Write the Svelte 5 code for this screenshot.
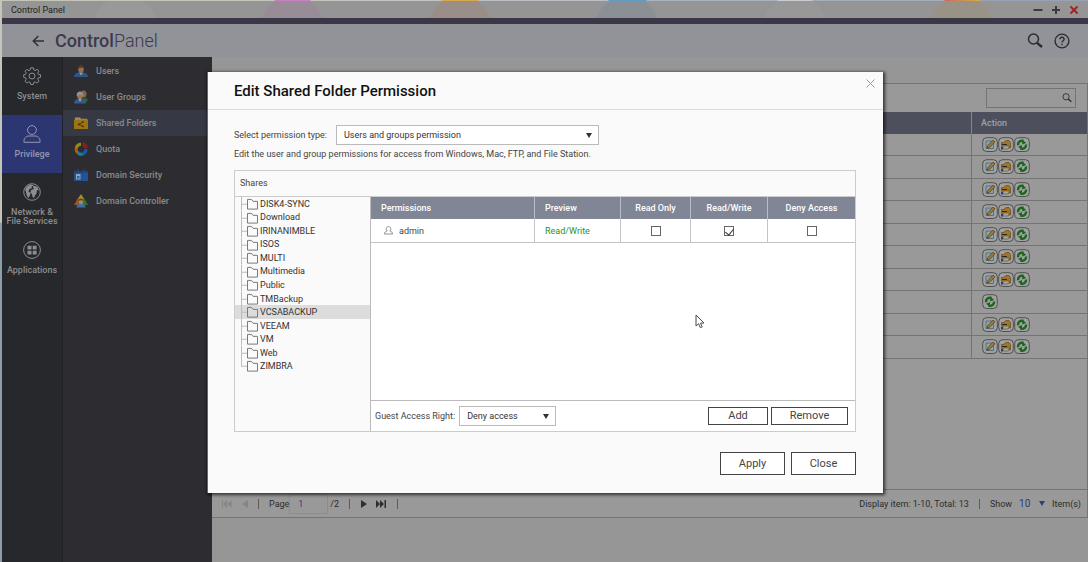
<script>
  const sections = [
    { id: 'system', lines: ['System'] },
    { id: 'privilege', lines: ['Privilege'] },
    { id: 'network', lines: ['Network &', 'File Services'] },
    { id: 'apps', lines: ['Applications'] },
  ];

  const pages = [
    { id: 'users', label: 'Users' },
    { id: 'groups', label: 'User Groups' },
    { id: 'folders', label: 'Shared Folders' },
    { id: 'quota', label: 'Quota' },
    { id: 'security', label: 'Domain Security' },
    { id: 'controller', label: 'Domain Controller' },
  ];

  const ALL = ['edit', 'permission', 'refresh'];
  const rows = [ALL, ALL, ALL, ALL, ALL, ALL, ALL, ['refresh'], ALL, ALL];

  const shares = [
    'DISK4-SYNC', 'Download', 'IRINANIMBLE', 'ISOS', 'MULTI', 'Multimedia', 'Public',
    'TMBackup', 'VCSABACKUP', 'VEEAM', 'VM', 'Web', 'ZIMBRA',
  ];

  let section = $state('privilege');
  let page = $state('folders');
  let share = $state('VCSABACKUP');
  let open = $state(true);
  let pageNo = $state('1');
  let access = $state('rw');

  const preview = $derived({ ro: 'Read Only', rw: 'Read/Write', deny: 'Deny Access' }[access]);
</script>

{#snippet sectionIcon(id)}
  <svg class="section-icon" viewBox="0 0 18 18" fill="none" stroke="currentColor" stroke-width="1">
    {#if id === 'system'}
      <path d="M7.6 .8h2.8l.5 2.3 1.2.5 2-1.3 1.9 1.9-1.3 2 .6 1.2 2.2.4v2.6l-2.2.5-.6 1.3 1.3 2-1.9 1.9-2-1.3-1.2.5-.5 2.1H7.6l-.5-2.1-1.2-.5-2 1.3L2 14.2l1.3-2-.6-1.3-2-.5V7.8l2-.4.6-1.2-1.3-2 1.9-1.9 2 1.3 1.2-.5z" />
      <circle cx="9" cy="9" r="3" />
    {:else if id === 'privilege'}
      <circle cx="9" cy="5" r="4.4" />
      <path d="M1 17.3v-2.2c0-2 2-3.3 4-4.1h8c2 .8 4 2.1 4 4.1v2.2z" />
    {:else if id === 'network'}
      <circle cx="9" cy="9" r="8.3" />
      <path fill="currentColor" stroke="none" d="M2 6.500C3.500 3 6 1.500 9 1.500l1.500 1.200-2 .8.5 1.500-2.500 1-1 2.500 2 1.500-.5 2.500-1.500 2.500L3.500 12 3 9zM10.500 2.500l4 1.500 1.500 3.500-2-.5-.5 3.500-1.500 2-1 2.500-1.500-1-.5-3-1.500-1 .5-3 3-1-1-1.500z" />
    {:else}
      <circle cx="9" cy="9" r="8.4" />
      <path fill="currentColor" stroke="none" d="M4.500 4.800h4v3.700h-4zM9.700 4.800h3.900v3.700H9.700zM4.500 9.700h4v3.700h-4zM9.700 9.700h3.900v3.700H9.700z" />
    {/if}
  </svg>
{/snippet}

{#snippet pageIcon(id)}
  <svg class="page-icon" viewBox="0 0 14 14">
    {#if id === 'users'}
      <path d="M0 13c0-3 2.500-4 4.500-4.500h5C11.500 9 14 10 14 13z" fill="#2d5588" />
      <path d="M5 8.500 7 11.500 9 8.500z" fill="#98a2ac" />
      <ellipse cx="7" cy="5" rx="2.800" ry="3.800" fill="#94704f" />
      <path d="M4 4.800C3.500 0 10.500 0 10 4.800 9 3.200 6 3.200 4 4.800z" fill="#49321f" />
    {:else if id === 'groups'}
      <ellipse cx="9.500" cy="4" rx="3" ry="3.500" fill="#8d6347" />
      <path d="M8 8.500h3V7l3 3-3 3v-1.500H8z" fill="#28711f" />
      <path d="M0 13.500c0-3 2-4 4-4.500h4c2 .5 4 1.500 4 4.500z" fill="#305c92" />
      <path d="M4.500 9 6 12 7.500 9z" fill="#a2a9b0" />
      <ellipse cx="6" cy="6" rx="2.700" ry="3.300" fill="#98765a" />
      <path d="M2.800 6.500C1.500-.5 10.500 0 9.200 6.500 8 4 5 4 2.800 6.500z" fill="#94948f" />
    {:else if id === 'folders'}
      <path d="M1 1.500h5l1 1.200h6V5H1z" fill="#a2916a" />
      <path d="M0 3.500h14V13H0z" fill="#9c7413" />
      <path d="M9 6 5 8.300 9 10.500" fill="none" stroke="#403414" />
      <path d="M8.200 5.200h1.600v1.600H8.200zM4 7.500h1.700v1.700H4zM8.200 9.700h1.600v1.600H8.200z" fill="#403414" />
    {:else if id === 'quota'}
      <g fill="none" stroke-width="3">
        <path d="M7 2.300A5 5 0 0 0 2.200 6" stroke="#998716" />
        <path d="M2.200 6A5 5 0 0 0 4 11" stroke="#a86112" />
        <path d="M4 11a5 5 0 0 0 5 .8" stroke="#1d8096" />
        <path d="M9 11.800A5 5 0 0 0 12 7" stroke="#2155a4" />
      </g>
      <path d="M9 0a7 7 0 0 1 4.800 5.800l-3.500.5A4 4 0 0 0 8.500 3.500z" fill="#8f1f1c" />
    {:else if id === 'security'}
      <path d="M3 1h2v3H3zM9 1h2v3H9z" fill="#193f7c" />
      <path d="M0 3h14v10H0z" fill="#225399" />
      <path d="M0 3h14v2H0z" fill="#1c4787" />
      <path d="M2 6h4.500v5.500H2z" fill="#95a4b4" />
      <path d="M3 10.500h2.500V8H3z" fill="#3e618b" />
    {:else}
      <path d="M7 0l3.500 5.500h-7z" fill="#a69020" />
      <path d="M4 4 8 11H0z" fill="#a45216" />
      <path d="M10 4l4 7H7z" fill="#277b24" />
      <path d="M2.500 13.500c0-3 2-4 4.500-4s4.500 1 4.500 4z" fill="#3d6fa4" />
      <ellipse cx="7" cy="7.500" rx="2.200" ry="2.700" fill="#a4886a" />
      <path d="M4.600 7c0-3.500 4.800-3.500 4.800 0C8 6 6 6 4.600 7z" fill="#5d4029" />
    {/if}
  </svg>
{/snippet}

{#snippet actionIcon(kind)}
  <svg viewBox="0 0 16 16" width="16" height="16">
    <rect x=".7" y=".7" width="14.600" height="13.800" rx="4" fill="#a1a1a1" stroke="#505050" />
    {#if kind === 'edit'}
      <path d="M4 4h7.500v7.500H4z" fill="#8ba4ab" stroke="#56717c" />
      <path d="M5.500 9 11 3.200l2 1.600L7.300 10.500 5 11z" fill="#a67a32" stroke="#443419" stroke-width=".7" />
    {:else if kind === 'permission'}
      <path d="M3.500 5.500h2L8 3.500h3l1.500 2V11H5L3.500 9z" fill="#a27423" stroke="#5b4013" stroke-width=".6" />
      <path d="M4 7.500h5" stroke="#2f2819" />
      <path d="M5 9h6.500L10 12H5z" fill="#aaa78c" stroke="#4a4330" stroke-width=".5" />
      <path d="M3 10h2v2.500H3z" fill="#263f80" />
    {:else}
      <path d="M4.200 8.200C3.500 5 6.500 3 9.500 4" fill="none" stroke="#1b6720" stroke-width="2.400" />
      <path d="M8.200 2.500v5l4-1.500z" fill="#1b6720" />
      <path d="M12 7.500c.5 3-2.500 5-5.500 4" fill="none" stroke="#1b6720" stroke-width="2.400" />
      <path d="M8 13V8L4 9.800z" fill="#1b6720" />
    {/if}
  </svg>
{/snippet}

{#snippet magnifier(size)}
  <svg class="magnifier" width={size} height={size} viewBox="0 0 16 16" fill="none" stroke="currentColor">
    <circle cx="6.500" cy="6" r="5" stroke-width="1.500" />
    <path d="M10 9.800 15 14" stroke-width="2.300" />
  </svg>
{/snippet}

<div class="desktop">
  <div class="window">
    <div class="titlebar">
      <span>Control Panel</span>
      <div class="window-buttons">
        <button aria-label="Minimize"><svg viewBox="0 0 10 10"><path d="M.5 5h9" /></svg></button>
        <button aria-label="Maximize"><svg viewBox="0 0 10 10"><path d="M1 5h8M5 1v8" /></svg></button>
        <button class="red" aria-label="Close window"><svg viewBox="0 0 10 10"><path d="M1.500 1.500l7 7M8.500 1.500l-7 7" /></svg></button>
      </div>
    </div>

    <header class="appbar">
      <button class="back" aria-label="Back">
        <svg width="12" height="12" viewBox="0 0 12 12" fill="none" stroke="currentColor" stroke-width="1.500">
          <path d="M12 6H1.500M6.300 1 1.300 6l5 5" />
        </svg>
      </button>
      <h1><b>Control</b>Panel</h1>
      <button aria-label="Search">{@render magnifier(16)}</button>
      <button aria-label="Help">
        <svg width="16" height="16" viewBox="0 0 16 16" fill="none" stroke="currentColor" stroke-width="1.400">
          <circle cx="8" cy="8" r="6.900" />
          <path d="M5.900 6.300c0-2.900 4.300-2.700 4.200-.1C10.100 7.700 8 7.700 8 9.500M8 10.700v1.500" />
        </svg>
      </button>
    </header>

    <div class="body">
      <nav class="sections" aria-label="Sections">
        {#each sections as s}
          <button class:active={section === s.id} onclick={() => (section = s.id)}>
            {@render sectionIcon(s.id)}
            {#each s.lines as line}<span>{line}</span>{/each}
          </button>
        {/each}
      </nav>

      <nav class="pages" aria-label="Pages">
        {#each pages as p}
          <button class:active={page === p.id} onclick={() => (page = p.id)}>
            {@render pageIcon(p.id)}
            {p.label}
          </button>
        {/each}
      </nav>

      <main>
        <div class="list">
          <div class="toolbar">
            <div class="search">
              <input type="text" aria-label="Search folders" />
              {@render magnifier(10)}
            </div>
          </div>
          <table class="folders">
            <thead>
              <tr><th></th><th class="action">Action</th></tr>
            </thead>
            <tbody>
              {#each rows as actions}
                <tr>
                  <td></td>
                  <td>
                    <div class="actions">
                      {#each actions as kind}
                        <button aria-label={kind}>{@render actionIcon(kind)}</button>
                      {/each}
                    </div>
                  </td>
                </tr>
              {/each}
            </tbody>
          </table>
          <div class="pager">
            <button disabled aria-label="First page"><svg width="10" height="8" viewBox="0 0 10 8"><path d="M0 0h1v8H0zM5 0v8L1 4zM9.500 0v8l-4-4z" /></svg></button>
            <button disabled aria-label="Previous page"><svg width="6" height="8" viewBox="0 0 6 8"><path d="M6 0v8L0 4z" /></svg></button>
            <i class="bar"></i>
            <div class="page-field">
              <label for="page-no">Page</label>
              <input id="page-no" type="text" bind:value={pageNo} />
              <span>/2</span>
            </div>
            <i class="bar"></i>
            <div class="forward">
              <button aria-label="Next page"><svg width="6" height="8" viewBox="0 0 6 8"><path d="M0 0v8l6-4z" /></svg></button>
              <button aria-label="Last page"><svg width="10" height="8" viewBox="0 0 10 8"><path d="M0 0v8l4-4zM4 0v8l4-4zM8.500 0H10v8H8.500z" /></svg></button>
            </div>
            <i class="bar"></i>
            <span class="count">Display item: 1-10, Total: 13</span>
            <i class="bar"></i>
            <div class="size-field">
              <label for="page-size">Show</label>
              <div class="select page-size">
                <select id="page-size"><option>10</option><option>20</option><option>50</option></select>
                <svg width="6" height="5" viewBox="0 0 6 5"><path d="M0 0h6L3 5z" /></svg>
              </div>
              <span>Item(s)</span>
            </div>
          </div>
        </div>
      </main>
    </div>
  </div>

  {#if open}
    <div class="overlay">
      <div class="dialog" role="dialog" aria-modal="true" aria-labelledby="dialog-title">
        <header class="dialog-header">
          <h2 id="dialog-title">Edit Shared Folder Permission</h2>
          <button aria-label="Close dialog" onclick={() => (open = false)}>
            <svg width="9" height="9" viewBox="0 0 9 9" stroke="currentColor"><path d="M.5.5l8 8M8.500.5l-8 8" /></svg>
          </button>
        </header>

        <div class="dialog-body">
          <div class="type-row">
            <label for="perm-type">Select permission type:</label>
            <div class="select type">
              <select id="perm-type">
                <option>Users and groups permission</option>
                <option>NFS host access</option>
              </select>
              <svg width="6" height="5" viewBox="0 0 6 5"><path d="M0 0h6L3 5z" /></svg>
            </div>
          </div>
          <p>Edit the user and group permissions for access from Windows, Mac, FTP, and File Station.</p>

          <section class="panel">
            <h3>Shares</h3>
            <div class="columns">
              <div class="tree-pane">
                <ul class="tree">
                  {#each shares as name}
                    <li>
                      <button class:active={share === name} onclick={() => (share = name)}>
                        <svg width="20" viewBox="0 0 20 14" preserveAspectRatio="none" fill="none">
                          <path class="branch" d={name === shares.at(-1) ? 'M.5 0v7.500H6' : 'M.5 0v14M.5 7.500H6'} />
                          <path class="folder" d="M6.500 12.500v-10h4l1.500 2h4.500v8z" />
                        </svg>
                        {name}
                      </button>
                    </li>
                  {/each}
                </ul>
              </div>

              <div class="perm-pane">
                <table class="perms">
                  <colgroup>
                    <col class="c-name" /><col class="c-preview" /><col class="c-ro" /><col class="c-rw" /><col />
                  </colgroup>
                  <thead>
                    <tr>
                      <th>Permissions</th><th>Preview</th>
                      <th class="mid">Read Only</th><th class="mid">Read/Write</th><th class="mid">Deny Access</th>
                    </tr>
                  </thead>
                  <tbody>
                    <tr>
                      <td>
                        <span class="user">
                          <svg width="9" height="9" viewBox="0 0 9 9" fill="none" stroke="#777" stroke-width=".8">
                            <path d="M3.200 5C1.500 3.500 2.200.5 4.500.5S7.500 3.500 5.800 5C7.500 5.500 8.500 6.200 8.500 8h-8c0-1.800 1-2.500 2.700-3z" />
                          </svg>
                          admin
                        </span>
                      </td>
                      <td class="preview">{preview}</td>
                      {#each ['ro', 'rw', 'deny'] as level}
                        <td class="mid">
                          <input
                            type="checkbox"
                            aria-label={level}
                            checked={access === level}
                            onchange={() => (access = level)}
                          />
                        </td>
                      {/each}
                    </tr>
                  </tbody>
                </table>

                <div class="guest">
                  <label for="guest">Guest Access Right:</label>
                  <div class="select guest-select">
                    <select id="guest">
                      <option>Deny access</option>
                      <option>Read only</option>
                      <option>Read/Write</option>
                    </select>
                    <svg width="6" height="5" viewBox="0 0 6 5"><path d="M0 0h6L3 5z" /></svg>
                  </div>
                  <button class="btn add">Add</button>
                  <button class="btn remove">Remove</button>
                </div>
              </div>
            </div>
          </section>

          <footer>
            <button class="btn">Apply</button>
            <button class="btn" onclick={() => (open = false)}>Close</button>
          </footer>
        </div>

        <svg class="cursor" width="10" height="15" viewBox="0 0 10 15">
          <path d="M1 1v11l2.600-2.300 1.800 4 1.800-.8-1.700-3.800H9z" fill="#fff" stroke="#4a4a50" />
        </svg>
      </div>
    </div>
  {/if}
</div>

<style>
  :global(body) { margin: 0; }
  .desktop {
    position: relative; box-sizing: border-box; min-height: 100vh;
    padding: 1px 0 0 2px; display: flex;
    background:
      linear-gradient(90deg,
        #c2c5b8 274px, #c97fc4 275px 310px, #c2c5bd 311px 441px, #d8a94c 442px 478px,
        #b9bfc4 479px 608px, #5f9dc4 609px 646px, #a9b2bf 647px 777px, #c8ccd0 778px 812px,
        #a3adbb 813px 944px, #cc6a5c 945px, #d3b04a 980px, #97a3b5 981px) top / 100% 1px no-repeat,
      linear-gradient(#c2c5b8 0, #c2c5b8 222px, #8f9daa 223px);
    font-family: Roboto, "Liberation Sans", sans-serif; font-size: 9px; line-height: 12px; color: #333;
  }
  .desktop * { box-sizing: border-box; }
  button, input, select { font: inherit; color: inherit; margin: 0; padding: 0; border: 0; background: none; border-radius: 0; }
  button { cursor: pointer; display: flex; align-items: center; justify-content: center; }
  svg { display: block; flex: none; }
  h1, h2, h3, p, ul { margin: 0; padding: 0; }

  .window { flex: 1; display: flex; flex-direction: column; min-width: 0; }
  .titlebar {
    height: 17px; padding: 0 9px; display: flex; align-items: center; justify-content: space-between;
    color: #222;
    background:
      radial-gradient(circle at 123px 27px, #999 31px, transparent 33px),
      radial-gradient(circle at 290px 27px, #988c97 31px, transparent 33px),
      radial-gradient(circle at 458px 27px, #998e88 31px, transparent 33px),
      radial-gradient(circle at 625px 27px, #8b9096 31px, transparent 33px),
      radial-gradient(circle at 793px 27px, #989899 31px, transparent 33px),
      radial-gradient(circle at 960px 27px, #999387 31px, transparent 33px),
      #959595;
  }
  .window-buttons { display: flex; gap: 8px; }
  .window-buttons svg { width: 10px; height: 10px; stroke: #3b3b40; stroke-width: 2; }
  .window-buttons .red svg { stroke: #a32322; }

  .appbar {
    height: 39px; border-top: 6px solid #3b3747; background: #929398;
    padding: 0 18px 0 30px; display: flex; align-items: center; gap: 11px; color: #2c2a35;
  }
  .appbar h1 { flex: 1; font-size: 18px; line-height: 24px; font-weight: 300; color: #3c394c; }
  .appbar h1 b { font-weight: 500; }
  .back { color: #302d40; }

  .body { flex: 1; display: grid; grid-template-columns: 60px 150px 1fr; }
  .sections { background: #26282c; color: #8d8d8f; font-weight: 500; }
  .sections button {
    width: 100%; height: 58px; flex-direction: column; justify-content: flex-start;
    padding-top: 10px; line-height: 9px;
  }
  .sections .active { background: #2b3672; color: #9498ac; }
  .section-icon { width: 18px; height: 18px; margin-bottom: 7px; }
  .pages { background: #2d2d31; border-left: 1px solid #222226; color: #8a8a8d; font-weight: 500; padding-top: 1px; }
  .pages button { width: 100%; height: 26px; padding-left: 11px; gap: 8px; justify-content: flex-start; }
  .pages .active { background: #363944; }
  .page-icon { width: 14px; height: 14px; }

  main { background: #969696; padding: 26px 0 44px; display: flex; }
  .list {
    flex: 1; display: flex; flex-direction: column; background: #999;
    border: solid #747474; border-width: 1px 1px 1px 0;
  }
  .toolbar { height: 28px; padding: 4px 11px; display: flex; justify-content: flex-end; }
  .search {
    width: 90px; height: 20px; border: 1px solid #747474; padding-right: 3px;
    display: flex; align-items: center; color: #333;
  }
  .search input { flex: 1; min-width: 0; height: 100%; padding-left: 4px; outline: none; }
  .folders { width: 100%; border-collapse: separate; border-spacing: 0; table-layout: fixed; }
  .folders th {
    height: 22px; padding: 0; background: #4d4f5c; color: #a0a1a7;
    font-weight: 500; text-align: left;
  }
  .folders .action { width: 116px; border-left: 1px solid #85868c; padding-left: 9px; }
  .folders td { height: 22px; padding: 0; border-bottom: 1px solid #747474; }
  .folders tr:nth-child(even) td { height: 23px; }
  .folders td + td { border-left: 1px solid #747474; padding-left: 10px; }
  .actions { display: flex; }

  .pager {
    margin-top: auto; height: 28px; border-top: 1px solid #747474; padding: 0 6px 0 10px;
    display: flex; align-items: center; gap: 10px; color: #2c2c2c;
  }
  .pager button svg { fill: #2e2e2e; }
  .pager button:disabled svg { fill: #858585; }
  .bar { width: 1px; height: 10px; background: #5f5a58; }
  .page-field { display: flex; align-items: center; }
  .page-field input { width: 39px; height: 20px; border: 1px solid #8c8c8c; padding-left: 8px; margin-right: 2px; color: #24437c; }
  .forward { display: flex; gap: 9px; padding: 0 1px; }
  .count { margin-left: auto; }
  .size-field { display: flex; align-items: center; gap: 7px; }

  .select { display: grid; align-items: center; }
  .select select { grid-area: 1 / 1; appearance: none; width: 100%; height: 100%; outline: none; }
  .select svg { grid-area: 1 / 1; justify-self: end; pointer-events: none; fill: #333; }
  .page-size { width: 26px; font-size: 10px; color: #24437c; }
  .page-size svg { fill: #24437c; }

  .overlay { position: absolute; inset: 3px 0 0 2px; display: flex; align-items: center; justify-content: center; }
  .dialog {
    position: relative; width: 676px; max-width: 96%; background: #fafafa; color: #444;
    border-left: 1px solid #666; box-shadow: 1px 1px 3px 1px rgba(0, 0, 0, .65);
  }
  .dialog-header {
    height: 38px; padding: 0 8px 0 26px; border-bottom: 1px solid #ddd;
    display: flex; justify-content: space-between;
  }
  .dialog-header h2 { font-size: 15px; line-height: 38px; font-weight: 500; color: #111; }
  .dialog-header button { height: 23px; color: #999; }
  .dialog-body { padding: 15px 27px 18px 26px; }
  .type-row { display: flex; align-items: center; gap: 9px; }
  .dialog .select { background: #fff; border: 1px solid #bbb; height: 20px; color: #333; }
  .dialog .select select { padding: 0 20px 0 7px; }
  .dialog .select svg { margin-right: 6px; }
  .type { width: 263px; }
  .dialog p { line-height: 12px; padding: 3px 0 10px; }

  .panel { border: 1px solid #ccc; }
  .panel h3 { height: 26px; padding-left: 5px; border-bottom: 1px solid #ccc; font-size: 9px; line-height: 25px; font-weight: 400; }
  .columns { display: grid; grid-template-columns: 135px 1fr; }
  .tree { height: 176px; list-style: none; display: grid; grid-auto-rows: minmax(0, 1fr); }
  .tree button {
    width: 100%; height: 100%; padding-left: 6px; justify-content: flex-start;
    line-height: 12px; color: #333;
  }
  .tree svg { height: 100%; margin-right: -1px; }
  .tree .active { background: #dcdcdc; }
  .branch { stroke: #bbb; }
  .folder { stroke: #777; }

  .perm-pane { height: 234px; background: #fff; border-left: 1px solid #bbb; display: flex; flex-direction: column; }
  .perms { width: 100%; table-layout: fixed; border-collapse: separate; border-spacing: 0; }
  .c-name { width: 164px; }
  .c-preview { width: 86px; }
  .c-ro { width: 70px; }
  .c-rw { width: 77px; }
  .perms th {
    height: 22px; padding: 0 0 0 10px; text-align: left; font-weight: 500; color: #fff;
    background: #808696; border-right: 1px solid #b9bcc4;
  }
  .perms td { height: 24px; padding: 0 0 0 10px; border: solid #c4c4c4; border-width: 0 1px 1px 0; }
  .perms th:last-child, .perms td:last-child { border-right: 0; }
  .perms .mid { padding: 0; text-align: center; }
  .perms .preview { color: #2b9317; }
  .user { display: flex; align-items: center; gap: 6px; padding-left: 3px; }
  .perms input {
    appearance: none; width: 10px; height: 10px; border: 1px solid #666; background: #fff;
    display: grid; place-items: center; margin: 0 auto;
  }
  .perms input:checked::after {
    content: ''; width: 4px; height: 7px; border: solid #333; border-width: 0 1px 1px 0;
    transform: rotate(40deg);
  }

  .guest {
    margin-top: auto; height: 31px; border-top: 1px solid #bbb; padding: 0 7px 0 4px;
    display: flex; align-items: center;
  }
  .guest-select { width: 97px; margin-left: 4px; }
  .btn {
    width: 65px; height: 23px; background: #fff; border: 1px solid #444;
    font-size: 11px; line-height: 14px; color: #444;
  }
  .guest .btn { height: 18px; }
  .guest .add { width: 60px; margin-left: auto; }
  .guest .remove { width: 77px; margin-left: 3px; }
  footer { margin-top: 20px; display: flex; justify-content: flex-end; gap: 6px; }

  .cursor { position: absolute; left: 487px; top: 242px; pointer-events: none; }
</style>
